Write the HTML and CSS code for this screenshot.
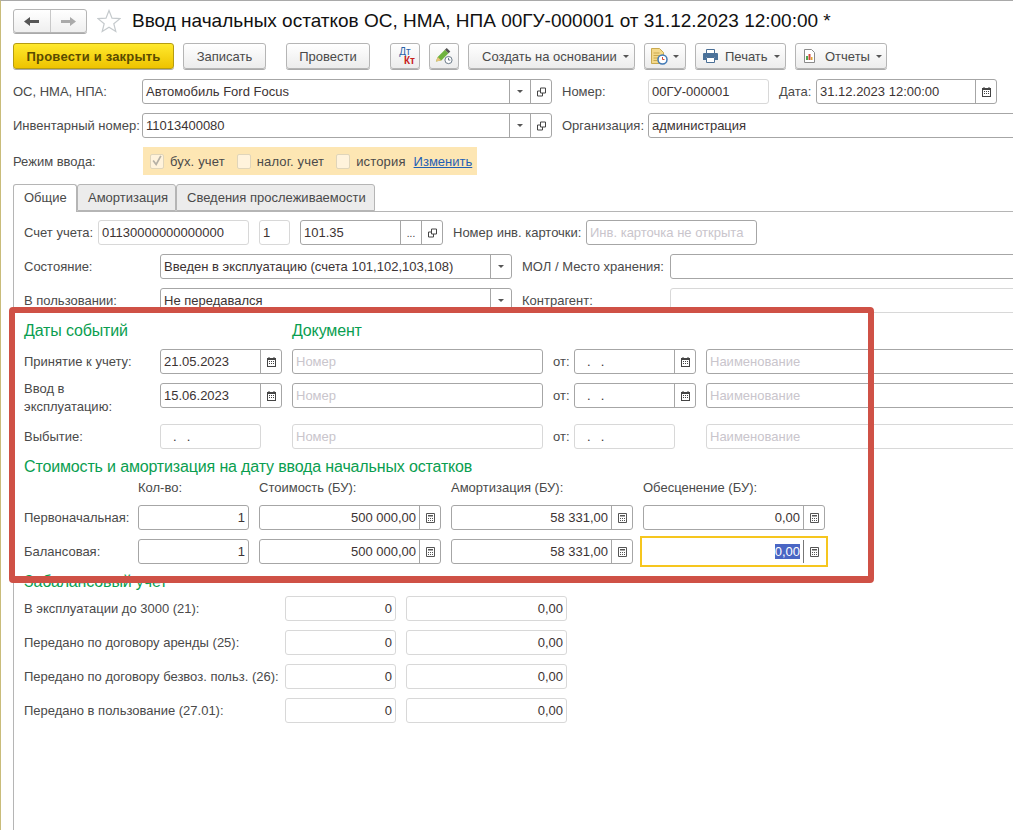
FILE: index.html
```html
<!DOCTYPE html>
<html lang="ru">
  <head>
    <meta charset="UTF-8" />
    <title>Ввод начальных остатков ОС, НМА, НПА</title>
    <link rel="stylesheet" href="styles.css">
  </head>

  <body>
    <svg class="sprite" xmlns="http://www.w3.org/2000/svg">
      <symbol id="i-left" viewBox="0 0 15 11"><path d="M0 5.500 6 1v3h9v3H6v3z"/></symbol>
      <symbol id="i-right" viewBox="0 0 15 11"><path d="M15 5.500 9 1v3H0v3h9v3z"/></symbol>
      <symbol id="i-star" viewBox="0 0 24 24"><path d="M12 1.500l3 7.600 8 .5-6.200 5.100 2 7.800L12 18.200 5.200 22.500l2-7.800L1 9.600l8-.5z" fill="#fff" stroke="#c5cacd" stroke-width="1.200"/></symbol>
      <symbol id="i-drop" viewBox="0 0 6 3"><path d="M0 0h6L3 3z"/></symbol>
      <symbol id="i-open" viewBox="0 0 9 9"><path d="M3.500.5h5v5h-5z M3.500 3.500h-3v5h5v-3" fill="none" stroke="#444"/></symbol>
      <symbol id="i-cal" viewBox="0 0 9 10"><path d="M0 1h1.500V0h1v1h4V0h1v1H9v9H0z" fill="#444"/><path d="M1 3h7v6H1z" fill="#fff"/><path d="M2 4h1v1H2zM4 4h1v1H4zM6 4h1v1H6zM2 6h1v1H2zM4 6h1v1H4zM6 6h1v1H6z" fill="#444"/></symbol>
      <symbol id="i-calc" viewBox="0 0 9 10"><path d="M.5.5h8v9h-8z" fill="#fff" stroke="#555"/><path d="M2 2h5v1.500H2z" fill="#555"/><path d="M2 5h1v1H2zM4 5h1v1H4zM6 5h1v1H6zM2 7h1v1H2zM4 7h1v1H4zM6 7h1v1H6z" fill="#555"/></symbol>
      <symbol id="i-check" viewBox="0 0 14 14"><path d="M2.500 6.500 6 11l5.500-10" fill="none" stroke="#b5b0a5" stroke-width="2"/></symbol>
      <symbol id="i-pencil" viewBox="0 0 22 20"><path d="M2 16l2-5L12 3l4 4-8 8z" fill="#6fb33f"/><path d="M12 3l2-2 4 4-2 2z" fill="#555"/><path d="M2 16l2-5 4 4z" fill="#e8c27a"/><circle cx="16" cy="14.500" r="4" fill="#fff" stroke="#5a6b7a"/><path d="M16 12v2.500h2" fill="none" stroke="#5a6b7a"/></symbol>
      <symbol id="i-doc" viewBox="0 0 17 17"><path d="M.5.500h8l4 4v11H.5z" fill="#f4d98a" stroke="#c9a94f"/><path d="M2.500 5h6M2.500 7.500h6M2.500 10h5M2.500 12.500h4" stroke="#c9a94f"/><circle cx="11.500" cy="11.500" r="4.500" fill="#fff" stroke="#3f78b5" stroke-width="1.500"/><path d="M11.500 9v2.500h2" fill="none" stroke="#d04a3a"/></symbol>
      <symbol id="i-print" viewBox="0 0 15 14"><path d="M3.500.5h8v4h-8z" fill="#fff" stroke="#4a6f96"/><path d="M1 4h13a1 1 0 0 1 1 1v6h-3V8H3v3H0V5a1 1 0 0 1 1-1z" fill="#4a7199"/><path d="M3.500 8.500h8v5h-8z" fill="#fff" stroke="#4a6f96"/></symbol>
      <symbol id="i-report" viewBox="0 0 13 14"><path d="M1.500.5h7l3 3v10h-10z" fill="#fff" stroke="#8a8a8a"/><path d="M3 7h2v4H3z" fill="#4fa64f"/><path d="M5.500 5h2v6h-2z" fill="#d04a3a"/><path d="M8 8h1.500v3H8z" fill="#e0a830"/></symbol>
    </svg>

    <div class="window">
      <div class="head">
        <div class="nav">
          <span class="nav-btn"><svg class="ic-arrow back"><use href="#i-left"/></svg></span>
          <span class="nav-btn"><svg class="ic-arrow fwd"><use href="#i-right"/></svg></span>
        </div>
        <svg class="ic-star"><use href="#i-star"/></svg>
        <h1>Ввод начальных остатков ОС, НМА, НПА 00ГУ-000001 от 31.12.2023 12:00:00 *</h1>
      </div>

      <div class="toolbar">
        <button class="btn primary b-post">Провести и закрыть</button>
        <button class="btn b-save">Записать</button>
        <button class="btn sep b-run">Провести</button>
        <button class="btn sep b-icon"><span class="dtkt"><b class="dt">Дт</b><b class="kt">Кт</b></span></button>
        <button class="btn b-icon"><svg class="ic-tool"><use href="#i-pencil"/></svg></button>
        <button class="btn b-create">Создать на основании<svg class="ic-drop"><use href="#i-drop"/></svg></button>
        <button class="btn b-doc"><svg class="ic-doc"><use href="#i-doc"/></svg><svg class="ic-drop"><use href="#i-drop"/></svg></button>
        <button class="btn b-print"><svg class="ic-print"><use href="#i-print"/></svg>Печать<svg class="ic-drop"><use href="#i-drop"/></svg></button>
        <button class="btn b-report"><svg class="ic-report"><use href="#i-report"/></svg>Отчеты<svg class="ic-drop"><use href="#i-drop"/></svg></button>
      </div>

      <div class="row">
        <label class="l-top">ОС, НМА, НПА:</label>
        <div class="field w-410"><span class="val">Автомобиль Ford Focus</span><i class="cell"><svg class="ic-drop"><use href="#i-drop"/></svg></i><i class="cell"><svg class="ic-small"><use href="#i-open"/></svg></i></div>
        <label class="l-right">Номер:</label>
        <div class="field pale w-121"><span class="val">00ГУ-000001</span></div>
        <label class="l-date">Дата:</label>
        <div class="field w-181"><span class="val">31.12.2023 12:00:00</span><i class="cell"><svg class="ic-small"><use href="#i-cal"/></svg></i></div>
      </div>

      <div class="row">
        <label class="l-top">Инвентарный номер:</label>
        <div class="field w-410"><span class="val">11013400080</span><i class="cell"><svg class="ic-drop"><use href="#i-drop"/></svg></i><i class="cell"><svg class="ic-small"><use href="#i-open"/></svg></i></div>
        <label class="l-right">Организация:</label>
        <div class="field w-long"><span class="val">администрация</span></div>
      </div>

      <div class="row-mode">
        <label class="l-mode">Режим ввода:</label>
        <div class="mode">
          <span class="box"><svg class="ic-check"><use href="#i-check"/></svg></span><span class="mode-text">бух. учет</span>
          <span class="box"></span><span class="mode-text">налог. учет</span>
          <span class="box"></span><span class="mode-text">история</span>
          <a href="#" class="link">Изменить</a>
        </div>
      </div>

      <div class="tabs">
        <div class="tab active t-1">Общие</div>
        <div class="tab t-2">Амортизация</div>
        <div class="tab t-3">Сведения прослеживаемости</div>
      </div>

      <div class="panel">
        <div class="row">
          <label class="l-acc">Счет учета:</label>
          <div class="field pale w-151"><span class="val">01130000000000000</span></div>
          <div class="field pale w-31 gap"><span class="val">1</span></div>
          <div class="field w-143 gap"><span class="val">101.35</span><i class="cell dots">...</i><i class="cell"><svg class="ic-small"><use href="#i-open"/></svg></i></div>
          <label class="l-card">Номер инв. карточки:</label>
          <div class="field w-171"><span class="val empty">Инв. карточка не открыта</span></div>
        </div>

        <div class="row">
          <label class="l-wide">Состояние:</label>
          <div class="field w-352"><span class="val">Введен в эксплуатацию (счета 101,102,103,108)</span><i class="cell"><svg class="ic-drop"><use href="#i-drop"/></svg></i></div>
          <label class="l-mol">МОЛ / Место хранения:</label>
          <div class="field w-long"></div>
        </div>

        <div class="row">
          <label class="l-wide">В пользовании:</label>
          <div class="field w-352"><span class="val">Не передавался</span><i class="cell"><svg class="ic-drop"><use href="#i-drop"/></svg></i></div>
          <label class="l-mol">Контрагент:</label>
          <div class="field pale w-long"></div>
        </div>

        <div class="heads">
          <h2 class="h-dates">Даты событий</h2>
          <h2>Документ</h2>
        </div>

        <div class="row">
          <label class="l-wide">Принятие к учету:</label>
          <div class="field w-122"><span class="val">21.05.2023</span><i class="cell"><svg class="ic-small"><use href="#i-cal"/></svg></i></div>
          <div class="field w-251 gap"><span class="val empty">Номер</span></div>
          <label class="l-from">от:</label>
          <div class="field w-122"><span class="val dots-date">. &nbsp;.</span><i class="cell"><svg class="ic-small"><use href="#i-cal"/></svg></i></div>
          <div class="field w-long gap"><span class="val empty">Наименование</span></div>
        </div>

        <div class="row row-tall">
          <label class="l-wide two-line">Ввод в эксплуатацию:</label>
          <div class="field w-122"><span class="val">15.06.2023</span><i class="cell"><svg class="ic-small"><use href="#i-cal"/></svg></i></div>
          <div class="field w-251 gap"><span class="val empty">Номер</span></div>
          <label class="l-from">от:</label>
          <div class="field w-122"><span class="val dots-date">. &nbsp;.</span><i class="cell"><svg class="ic-small"><use href="#i-cal"/></svg></i></div>
          <div class="field w-long gap"><span class="val empty">Наименование</span></div>
        </div>

        <div class="row">
          <label class="l-wide">Выбытие:</label>
          <div class="field pale w-101"><span class="val dots-date">. &nbsp;.</span></div>
          <div class="field pale w-251 gap-31"><span class="val empty">Номер</span></div>
          <label class="l-from">от:</label>
          <div class="field pale w-101"><span class="val dots-date">. &nbsp;.</span></div>
          <div class="field pale w-long gap-31"><span class="val empty">Наименование</span></div>
        </div>

        <h2 class="h-cost">Стоимость и амортизация на дату ввода начальных остатков</h2>

        <div class="cost">
          <span></span>
          <span class="cap">Кол-во:</span>
          <span class="cap">Стоимость (БУ):</span>
          <span class="cap">Амортизация (БУ):</span>
          <span class="cap">Обесценение (БУ):</span>

          <label>Первоначальная:</label>
          <div class="field num"><span class="val">1</span></div>
          <div class="field num"><span class="val">500 000,00</span><i class="cell"><svg class="ic-small"><use href="#i-calc"/></svg></i></div>
          <div class="field num"><span class="val">58 331,00</span><i class="cell"><svg class="ic-small"><use href="#i-calc"/></svg></i></div>
          <div class="field num"><span class="val">0,00</span><i class="cell"><svg class="ic-small"><use href="#i-calc"/></svg></i></div>

          <label>Балансовая:</label>
          <div class="field num"><span class="val">1</span></div>
          <div class="field num"><span class="val">500 000,00</span><i class="cell"><svg class="ic-small"><use href="#i-calc"/></svg></i></div>
          <div class="field num"><span class="val">58 331,00</span><i class="cell"><svg class="ic-small"><use href="#i-calc"/></svg></i></div>
          <div class="field num focused"><span class="val"><span class="selected">0,00</span></span><i class="cell"><svg class="ic-small"><use href="#i-calc"/></svg></i></div>
        </div>

        <h2 class="h-off">Забалансовый учет</h2>

        <div class="off">
          <label>В эксплуатации до 3000 (21):</label>
          <div class="field pale num"><span class="val">0</span></div>
          <div class="field pale num"><span class="val">0,00</span></div>
          <label>Передано по договору аренды (25):</label>
          <div class="field pale num"><span class="val">0</span></div>
          <div class="field pale num"><span class="val">0,00</span></div>
          <label>Передано по договору безвоз. польз. (26):</label>
          <div class="field pale num"><span class="val">0</span></div>
          <div class="field pale num"><span class="val">0,00</span></div>
          <label>Передано в пользование (27.01):</label>
          <div class="field pale num"><span class="val">0</span></div>
          <div class="field pale num"><span class="val">0,00</span></div>
        </div>
      </div>

      <!-- красная рамка поверх формы -->
      <div class="frame"></div>
    </div>
  </body>
</html>
```

FILE: styles.css
```css
* {
  margin: 0;
  padding: 0;
  box-sizing: border-box;
}

body {
  font-family: "Liberation Sans", Arial, sans-serif;
  font-size: 13px;
  color: #4a4a4a;
  background: #fff;
}
.sprite {
  display: none;
}
.window {
  position: relative;
  width: 1013px;
  height: 830px;
  overflow: hidden;
  border-top: 1px solid #a9a9a9;
  border-left: 1px solid #c9bc7a;
  padding: 8px 0 0 12px;
}

/* шапка */
.head {
  display: flex;
  align-items: center;
  height: 24px;
}
.nav {
  display: flex;
  width: 74px;
  height: 24px;
  border: 1px solid #b5b5b5;
  border-radius: 3px;
  background: linear-gradient(#fff, #efefef);
  box-shadow: 0 1px 0 #aaa;
}
.nav-btn {
  display: flex;
  flex: 1;
  align-items: center;
  justify-content: center;
}
.nav-btn + .nav-btn {
  border-left: 1px solid #c8c8c8;
}
.ic-arrow {
  width: 15px;
  height: 11px;
}
.back {
  fill: #555;
}
.fwd {
  fill: #aaa;
}
.ic-star {
  width: 24px;
  height: 24px;
  margin-left: 10px;
}
h1 {
  margin-left: 11px;
  font-size: 19px;
  font-weight: 400;
  color: #111;
  white-space: nowrap;
}

/* кнопки */
.toolbar {
  display: flex;
  gap: 9px;
  margin-top: 10px;
  height: 26px;
  margin-bottom: 10px;
}
.btn {
  display: flex;
  align-items: center;
  justify-content: center;
  height: 26px;
  border: 1px solid #b5b5b5;
  border-radius: 3px;
  background: linear-gradient(#fff, #ececec);
  box-shadow: 0 1px 0 #aaa;
  font: inherit;
  color: #4a4a4a;
}
.primary {
  border-color: #b59c12;
  background: linear-gradient(#ffe92e, #eec300);
  font-weight: 700;
  letter-spacing: 0.2px;
  color: #5a4b00;
}
.sep {
  margin-left: 11px;
}
.b-post {
  width: 161px;
}
.b-save {
  width: 83px;
}
.b-run {
  width: 84px;
}
.b-icon {
  width: 30px;
}
.b-create {
  justify-content: flex-start;
  width: 167px;
  padding-left: 13px;
}
.b-doc {
  width: 42px;
}
.b-print {
  justify-content: flex-start;
  width: 91px;
  padding-left: 7px;
}
.b-report {
  justify-content: flex-start;
  width: 92px;
  padding-left: 7px;
}
.ic-drop {
  width: 6px;
  height: 3px;
  fill: #555;
}
.btn .ic-drop {
  margin-left: 6px;
}
.b-doc .ic-drop {
  margin-left: 5px;
}
.ic-tool {
  width: 20px;
  height: 18px;
}
.ic-doc {
  width: 17px;
  height: 17px;
}
.ic-print {
  width: 15px;
  height: 14px;
  margin-right: 7px;
}
.ic-report {
  width: 13px;
  height: 14px;
  margin-right: 9px;
}
.dtkt {
  display: flex;
  flex-direction: column;
  width: 20px;
  font-size: 10px;
  line-height: 9px;
}
.dt {
  color: #2a62a8;
  font-weight: 400;
}
.kt {
  align-self: flex-end;
  color: #c8201a;
}

/* строки формы */
.row {
  display: flex;
  align-items: center;
  height: 25px;
  margin-bottom: 9px;
}
.row-tall {
  margin-bottom: 16px;
}
label {
  flex: none;
  white-space: nowrap;
}
.l-top {
  width: 129px;
}
.l-right {
  width: 86px;
  margin-left: 10px;
}
.l-date {
  width: 37px;
  margin-left: 10px;
}
.l-acc {
  width: 74px;
}
.l-card {
  width: 133px;
  margin-left: 10px;
}
.l-wide {
  width: 136px;
}
.l-mol {
  width: 148px;
  margin-left: 10px;
}
.l-from {
  width: 21px;
  margin-left: 10px;
}
.two-line {
  padding: 5px 30px 0 0;
  line-height: 18px;
  white-space: normal;
}

.field {
  display: flex;
  flex: none;
  align-items: stretch;
  height: 25px;
  border: 1px solid #a6a6a6;
  border-radius: 3px;
  background: #fff;
  color: #3c3333;
}
.pale {
  border-color: #d8d8d8;
}
.val {
  flex: 1;
  overflow: hidden;
  padding-left: 3px;
  line-height: 23px;
  white-space: nowrap;
}
.empty {
  color: #c9c5cc;
}
.dots-date {
  padding-left: 12px;
  letter-spacing: 1px;
}
.cell {
  display: flex;
  flex: none;
  align-items: center;
  justify-content: center;
  width: 21px;
  border-left: 1px solid #a6a6a6;
  font-style: normal;
}
.dots {
  align-items: flex-end;
  padding-bottom: 5px;
  font-size: 10px;
}
.ic-small {
  width: 9px;
  height: 10px;
}
.gap {
  margin-left: 10px;
}
.gap-31 {
  margin-left: 31px;
}
.w-31 {
  width: 31px;
}
.w-101 {
  width: 101px;
}
.w-121 {
  width: 121px;
}
.w-122 {
  width: 122px;
}
.w-143 {
  width: 143px;
}
.w-151 {
  width: 151px;
}
.w-171 {
  width: 171px;
}
.w-181 {
  width: 181px;
}
.w-251 {
  width: 251px;
}
.w-352 {
  width: 352px;
}
.w-410 {
  width: 410px;
}
.w-long {
  width: 520px;
}

/* режим ввода */
.row-mode {
  display: flex;
  align-items: center;
  height: 28px;
}
.l-mode {
  width: 130px;
}
.mode {
  display: flex;
  align-items: center;
  width: 334px;
  height: 28px;
  padding-left: 7px;
  background: #fde6b3;
}
.box {
  display: flex;
  align-items: center;
  justify-content: center;
  width: 14px;
  height: 15px;
  border: 1px solid #e0d5ba;
  border-radius: 2px;
  background: #fff3dc;
}
.ic-check {
  width: 14px;
  height: 14px;
}
.mode-text {
  margin: 0 12px 0 6px;
  letter-spacing: 0.15px;
}
.link {
  margin-left: -4px;
  color: #1f5fb5;
}

/* закладки */
.tabs {
  display: flex;
  position: relative;
  height: 27px;
  margin-top: 9px;
}
.tab {
  height: 27px;
  padding-left: 10px;
  border: 1px solid #b5b5b5;
  border-radius: 3px 3px 0 0;
  background: #ececec;
  line-height: 25px;
}
.tab.active {
  height: 28px;
  border-bottom: 0;
  background: #fff;
}
.t-1 {
  width: 64px;
}
.t-2 {
  width: 99px;
}
.t-3 {
  width: 199px;
}
.panel {
  width: 1100px;
  height: 640px;
  padding: 8px 0 0 10px;
  border-top: 1px solid #b5b5b5;
  border-left: 1px solid #b5b5b5;
}

/* заголовки групп */
h2 {
  font-size: 16px;
  font-weight: 400;
  letter-spacing: -0.15px;
  line-height: 18px;
  color: #0a9e50;
}
.heads {
  display: flex;
  height: 18px;
  margin-bottom: 9px;
}
.h-dates {
  width: 268px;
}
.h-off {
  margin: 9px 0 5px;
}

/* таблицы сумм */
.cost {
  display: grid;
  grid-template-columns: 104px 111px 182px 182px 182px;
  grid-template-rows: 20px 25px 25px;
  gap: 9px 10px;
  align-items: center;
}
.cap {
  padding-top: 2px;
}
.off {
  display: grid;
  grid-template-columns: 251px 111px 161px;
  grid-auto-rows: 25px;
  gap: 9px 10px;
  align-items: center;
}
.num .val {
  padding: 0 3px 0 0;
  text-align: right;
}
.focused {
  border-color: transparent;
  border-radius: 0;
  outline: 2px solid #f6c61e;
  outline-offset: 1px;
}
.focused .cell {
  border-left-color: #777;
}
.selected {
  background: #4a66c4;
  color: #fff;
}

/* рамка-выделение на скриншоте */
.frame {
  position: absolute;
  left: 8px;
  top: 306px;
  width: 865px;
  height: 276px;
  border: 6px solid #cf5146;
  border-bottom-width: 7px;
  border-radius: 4px;
  pointer-events: none;
}
```
